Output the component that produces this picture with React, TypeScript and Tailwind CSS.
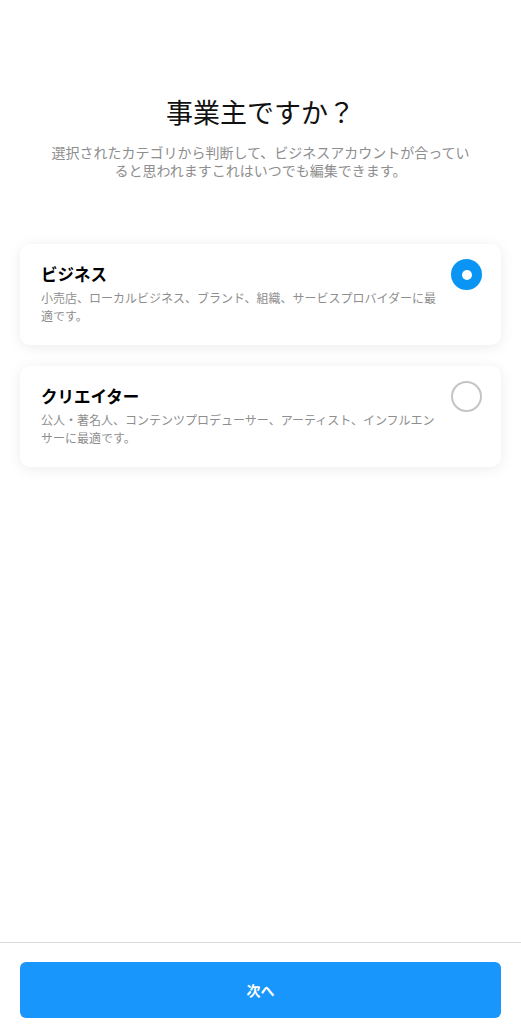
import React, { useState } from "react";

const FONT = { fontFamily: '"Noto Sans CJK JP", "Noto Sans", sans-serif' };

function Radio({ checked }: { checked: boolean }) {
  return checked ? (
    <div className="w-[31px] h-[31px] rounded-full bg-[#0a95f5] flex items-center justify-center shrink-0">
      <div className="w-[10px] h-[10px] rounded-full bg-white" />
    </div>
  ) : (
    <div className="w-[31px] h-[31px] rounded-full border-2 border-[#c4c4c4] bg-white shrink-0" />
  );
}

function Card({
  title,
  desc,
  checked,
  onClick,
}: {
  title: string;
  desc: string;
  checked: boolean;
  onClick: () => void;
}) {
  return (
    <div
      onClick={onClick}
      className="bg-white rounded-[10px] shadow-[0_2px_14px_rgba(0,0,0,0.08)] pl-[21px] pr-[19px] pt-[15px] pb-[20px] flex items-start cursor-pointer"
    >
      <div className="flex-1 pr-[8px]">
        <div className="text-[16.5px] font-bold text-black leading-[20px] mt-[5px]">{title}</div>
        <div className="text-[12px] text-[#8e8e8e] leading-[18px] mt-[5px] [line-break:strict]">{desc}</div>
      </div>
      <Radio checked={checked} />
    </div>
  );
}

export default function App() {
  const [sel, setSel] = useState(0);
  return (
    <div className="w-[521px] h-[1024px] bg-white flex flex-col" style={FONT}>
      <div className="flex-1 flex flex-col">
        <div className="pt-[93px] text-center text-[27px] text-[#111] leading-[38px]">
          事業主ですか？
        </div>
        <div className="mt-[12px] mx-auto w-[440px] text-center text-[14px] text-[#8e8e8e] leading-[18px]">
          選択されたカテゴリから判断して、ビジネスアカウントが合ってい
          <br />
          ると思われますこれはいつでも編集できます。
        </div>
        <div className="mt-[65px] px-[20px] flex flex-col gap-[21px]">
          <Card
            title="ビジネス"
            desc="小売店、ローカルビジネス、ブランド、組織、サービスプロバイダーに最適です。"
            checked={sel === 0}
            onClick={() => setSel(0)}
          />
          <Card
            title="クリエイター"
            desc="公人・著名人、コンテンツプロデューサー、アーティスト、インフルエンサーに最適です。"
            checked={sel === 1}
            onClick={() => setSel(1)}
          />
        </div>
      </div>
      <div className="border-t border-[#dbdbdb] px-[20px] pt-[19px] pb-[6px]">
        <button className="w-full h-[56px] rounded-[6px] bg-[#1896fb] text-white text-[14px] font-bold">
          次へ
        </button>
      </div>
    </div>
  );
}
